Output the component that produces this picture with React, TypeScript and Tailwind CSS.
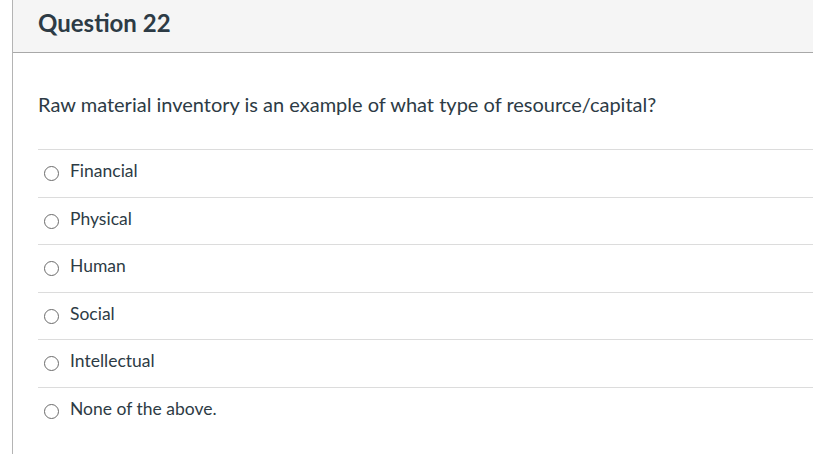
const options = ["Financial", "Physical", "Human", "Social", "Intellectual", "None of the above."];

export default function App() {
  return (
    <div className="h-[454px] w-[813px] overflow-hidden bg-white" style={{ fontFamily: "Lato, 'Open Sans', sans-serif" }}>
      <div className="ml-[12px] h-full border-l border-[#b4b4b4]">
        {/* header */}
        <div className="flex h-[53px] items-center border-b border-[#a8a8a8] bg-[#f5f5f5] pl-[25px] pb-[7px]">
          <h2 className="text-[24px] font-bold text-[#2d3b45]">Question 22</h2>
        </div>

        {/* body */}
        <div className="pl-[25px]">
          <p className="pt-[37px] pb-[31px] text-[20px] leading-[28px] text-[#2d3b45]">
            Raw material inventory is an example of what type of resource/capital?
          </p>
          <div>
            {options.map((o, i) => (
              <label
                key={o}
                className={`flex items-center border-t border-[#dcdcdc] pl-[6px] ${i % 2 === 0 ? "h-[48px]" : "h-[47px]"}`}
              >
                <span className="inline-block h-[15px] w-[15px] rounded-full border border-[#6b6b6b] bg-white" />
                <span className="ml-[11px] pb-[4px] text-[17.5px] text-[#2d3b45]">{o}</span>
              </label>
            ))}
          </div>
        </div>
      </div>
    </div>
  );
}
